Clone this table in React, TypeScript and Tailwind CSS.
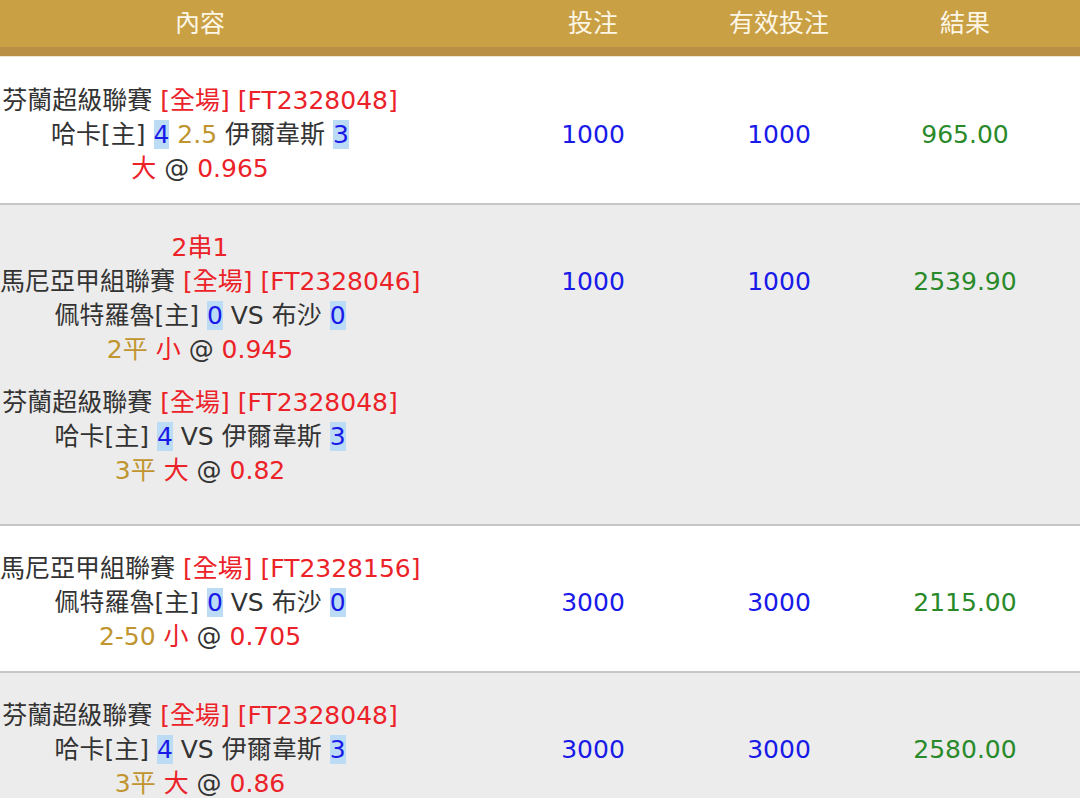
import React from "react";

type Leg = {
  league: string;
  code: string;
  home: string;
  homeScore: string;
  mid: string;
  midGold?: boolean;
  away: string;
  awayScore: string;
  prefix?: string;
  pick: string;
  odds: string;
};

type Row = {
  title?: string;
  legs: Leg[];
  bet: string;
  valid: string;
  result: string;
  gray?: boolean;
};

const rows: Row[] = [
  {
    legs: [
      {
        league: "芬蘭超級聯賽",
        code: "[FT2328048]",
        home: "哈卡[主]",
        homeScore: "4",
        mid: "2.5",
        midGold: true,
        away: "伊爾韋斯",
        awayScore: "3",
        pick: "大",
        odds: "0.965",
      },
    ],
    bet: "1000",
    valid: "1000",
    result: "965.00",
  },
  {
    title: "2串1",
    gray: true,
    legs: [
      {
        league: "馬尼亞甲組聯賽",
        code: "[FT2328046]",
        home: "佩特羅魯[主]",
        homeScore: "0",
        mid: "VS",
        away: "布沙",
        awayScore: "0",
        prefix: "2平",
        pick: "小",
        odds: "0.945",
      },
      {
        league: "芬蘭超級聯賽",
        code: "[FT2328048]",
        home: "哈卡[主]",
        homeScore: "4",
        mid: "VS",
        away: "伊爾韋斯",
        awayScore: "3",
        prefix: "3平",
        pick: "大",
        odds: "0.82",
      },
    ],
    bet: "1000",
    valid: "1000",
    result: "2539.90",
  },
  {
    legs: [
      {
        league: "馬尼亞甲組聯賽",
        code: "[FT2328156]",
        home: "佩特羅魯[主]",
        homeScore: "0",
        mid: "VS",
        away: "布沙",
        awayScore: "0",
        prefix: "2-50",
        pick: "小",
        odds: "0.705",
      },
    ],
    bet: "3000",
    valid: "3000",
    result: "2115.00",
  },
  {
    gray: true,
    legs: [
      {
        league: "芬蘭超級聯賽",
        code: "[FT2328048]",
        home: "哈卡[主]",
        homeScore: "4",
        mid: "VS",
        away: "伊爾韋斯",
        awayScore: "3",
        prefix: "3平",
        pick: "大",
        odds: "0.86",
      },
    ],
    bet: "3000",
    valid: "3000",
    result: "2580.00",
  },
];

function LegView({ leg, multi, last }: { leg: Leg; multi: boolean; last: boolean }) {
  return (
    <div className={multi ? (last ? "mb-[36px]" : "mb-[19px]") : ""}>
      <div className="whitespace-nowrap">
        {leg.league} <span className="text-[#ec2229]">[全場] {leg.code}</span>
      </div>
      <div className="whitespace-nowrap">
        {leg.home} <span className="bg-[#bcdcf6] text-[#1a1ae8]">{leg.homeScore}</span>{" "}
        <span className={leg.midGold ? "text-[#c0952f]" : ""}>{leg.mid}</span> {leg.away}{" "}
        <span className="bg-[#bcdcf6] text-[#1a1ae8]">{leg.awayScore}</span>
      </div>
      <div className="whitespace-nowrap">
        {leg.prefix && <span className="text-[#c0952f]">{leg.prefix} </span>}
        <span className="text-[#ec2229]">{leg.pick}</span> @{" "}
        <span className="text-[#ec2229]">{leg.odds}</span>
      </div>
    </div>
  );
}

export default function App() {
  return (
    <div
      className="w-[1080px] h-[798px] overflow-hidden bg-white text-[25px] leading-[34px] text-[#333333]"
      style={{ fontFamily: '"DejaVu Sans", "Noto Sans CJK TC", sans-serif' }}
    >
      {/* Header */}
      <div className="bg-[#c9a043] border-b-[9px] border-[#b88f44]">
        <div className="grid grid-cols-[500px_186px_186px_186px] h-[47px] items-center text-[#fdf6e6] text-center">
          <div className="pr-[100px]">內容</div>
          <div>投注</div>
          <div>有效投注</div>
          <div>結果</div>
        </div>
      </div>
      <div className="h-[1px] bg-[#efe6d2]" />

      {rows.map((row, i) => (
        <div
          key={i}
          className={`grid grid-cols-[500px_186px_186px_186px] text-center border-b-2 border-[#c6c6c6] ${
            row.gray ? "bg-[#ececec]" : "bg-white"
          } ${i === 0 ? "pt-[27px]" : "pt-[26px]"} ${row.legs.length > 1 ? "" : "pb-[17px]"}`}
        >
          <div className="pr-[100px]">
            {row.title && <div className="text-[#ec2229]">{row.title}</div>}
            {row.legs.map((leg, j) => (
              <LegView key={j} leg={leg} multi={row.legs.length > 1} last={j === row.legs.length - 1} />
            ))}
          </div>
          <div className="pt-[34px] text-[#1a1ae8]">{row.bet}</div>
          <div className="pt-[34px] text-[#1a1ae8]">{row.valid}</div>
          <div className="pt-[34px] text-[#2a8a2a]">{row.result}</div>
        </div>
      ))}
    </div>
  );
}
